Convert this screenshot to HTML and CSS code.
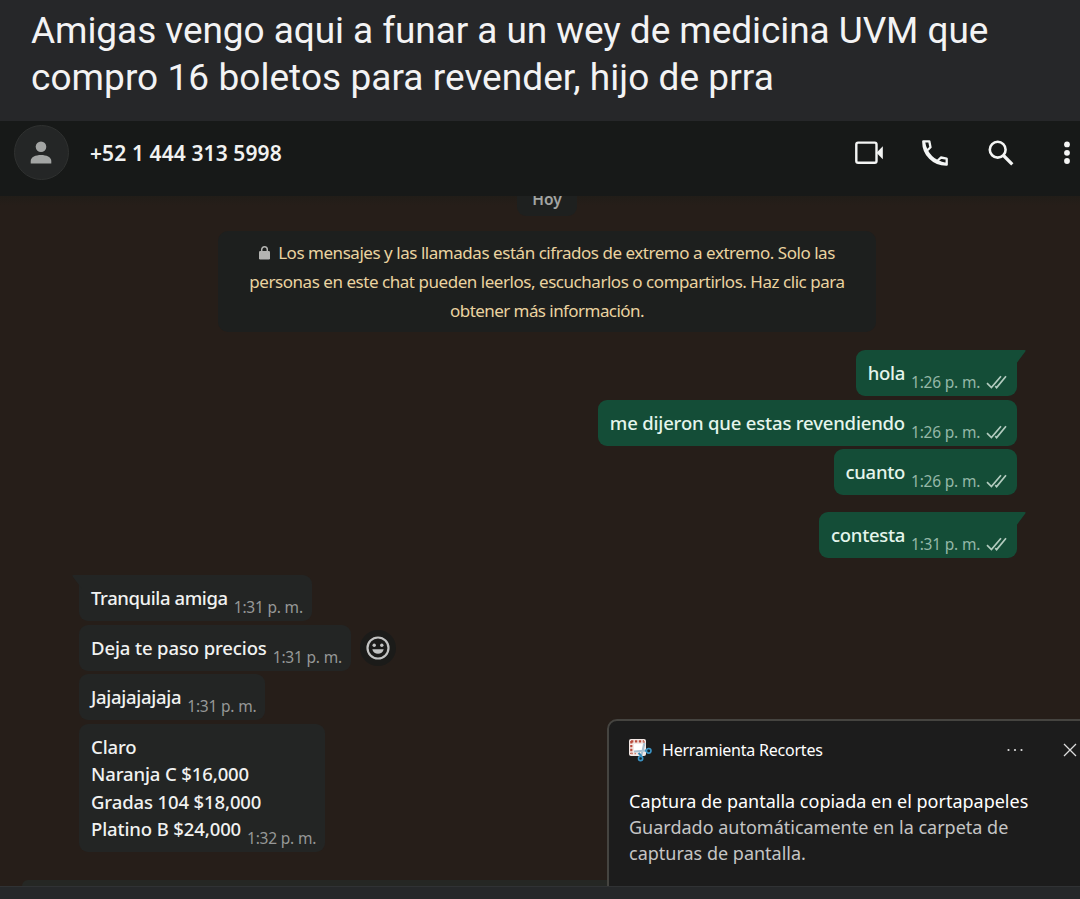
FILE: index.html
```html
<!DOCTYPE html>
<html lang="es">
<head>
<meta charset="utf-8">
<title>Chat</title>
<link rel="stylesheet" href="styles.css">
</head>
<body>
<svg class="defs" width="0" height="0">
  <symbol id="ticks" viewBox="0 0 21 14"><path d="M1 8.200l4.400 4.400L15 1.200M9.300 11.200l1.300 1.400L20 1.200" fill="none" stroke="currentColor" stroke-width="1.700"/></symbol>
  <symbol id="tail" viewBox="0 0 10 14"><path d="M0 0H8.600Q10.200 0 9.300 1.500L2.200 11Q.8 13 0 14Z" fill="currentColor"/></symbol>
</svg>
<div class="page">
  <h1 class="caption"><span class="c1">Amigas vengo aqui a funar a un wey de medicina UVM que</span><br><span class="c2">compro 16 boletos para revender, hijo de prra</span></h1>
  <header class="chat-header">
    <div class="avatar"><svg width="22" height="24" viewBox="0 0 22 24"><circle cx="11" cy="5.800" r="5.300" fill="#a3a5a4"/><path d="M.7 22.500v-2.500c0-4 5-6 10.300-6s10.300 2 10.300 6v2.500z" fill="#a3a5a4"/></svg></div>
    <div class="phone">+52 1 444 313 5998</div>
    <nav class="actions">
      <svg class="video" width="29" height="24" viewBox="0 0 29 24" fill="none" stroke="#f4f5f4" stroke-width="2.400"><rect x="1.300" y="1.600" width="20.200" height="20.200" rx="1.800"/><path d="M21.500 11.700l6.300-6.500v13z" fill="#f4f5f4" stroke="none"/></svg>
      <svg class="call" width="26" height="26" viewBox="0 0 26 26" fill="none" stroke="#f4f5f4" stroke-width="2.300" stroke-linejoin="round"><path d="M1.300 1.300H7.300L8.500 7.200L4.900 10.700Q8.500 17.600 15.300 21.100L18.900 17.500L24.700 18.700V24.700C11.500 24.900 1.100 14.500 1.300 1.300ZM4.900 10.700Q2.500 6.500 2 2M15.300 21.100Q19.500 23.500 24 24"/></svg>
      <svg class="search" width="26" height="26" viewBox="0 0 26 26" fill="none" stroke="#f4f5f4"><circle cx="9.700" cy="9.700" r="7.900" stroke-width="2.600"/><path d="M15.500 15.500l8.800 8.800" stroke-width="3.200"/></svg>
      <svg class="more" width="6" height="24" viewBox="0 0 6 24" fill="#f4f5f4"><circle cx="3" cy="3.400" r="2.900"/><circle cx="3" cy="11.800" r="2.900"/><circle cx="3" cy="20" r="2.900"/></svg>
    </nav>
  </header>
  <main class="chat">
    <div class="day"><span>Hoy</span></div>
    <section class="notice">
      <div class="n1"><svg width="11" height="14" viewBox="0 0 11 14"><rect y="5" width="11" height="8.500" rx="1.200" fill="#b4b4b2"/><path d="M2.700 5.500V3.600a2.800 2.800 0 0 1 5.600 0v1.900" fill="none" stroke="#b4b4b2" stroke-width="1.500"/></svg><span>Los mensajes y las llamadas están cifrados de extremo a extremo. Solo las</span></div>
      <div class="n2"><span>personas en este chat pueden leerlos, escucharlos o compartirlos. Haz clic para</span></div>
      <div class="n3"><span>obtener más información.</span></div>
    </section>
    <section class="thread">
      <div class="msg out tailed"><svg class="tail"><use href="#tail"/></svg><span class="text">hola</span><time>1:26 p. m.</time><svg class="ticks"><use href="#ticks"/></svg></div>
      <div class="msg out"><span class="text wide">me dijeron que estas revendiendo</span><time>1:26 p. m.</time><svg class="ticks"><use href="#ticks"/></svg></div>
      <div class="msg out"><span class="text">cuanto</span><time>1:26 p. m.</time><svg class="ticks"><use href="#ticks"/></svg></div>
      <div class="msg out tailed group"><svg class="tail"><use href="#tail"/></svg><span class="text">contesta</span><time>1:31 p. m.</time><svg class="ticks"><use href="#ticks"/></svg></div>
      <div class="msg in tailed group"><svg class="tail"><use href="#tail"/></svg><span class="text tight">Tranquila amiga</span><time>1:31 p. m.</time></div>
      <div class="row">
        <div class="msg in"><span class="text loose">Deja te paso precios</span><time>1:31 p. m.</time></div>
        <div class="react"><svg width="24" height="24" viewBox="0 0 24 24"><circle cx="12" cy="12" r="10.500" fill="none" stroke="#c2c3c2" stroke-width="2.200"/><circle cx="8.200" cy="9.300" r="1.700" fill="#c2c3c2"/><circle cx="15.800" cy="9.300" r="1.700" fill="#c2c3c2"/><path d="M6.300 13.300H17.700C16.500 19.300 7.500 19.300 6.300 13.300Z" fill="#c2c3c2"/></svg></div>
      </div>
      <div class="msg in"><span class="text">Jajajajajaja</span><time>1:31 p. m.</time></div>
      <div class="msg in list"><span class="text">Claro<br>Naranja C $16,000<br>Gradas 104 $18,000<br>Platino B $24,000</span><time>1:32 p. m.</time></div>
    </section>
    <div class="composer"></div>
    <aside class="toast">
      <div class="toast-head">
        <svg width="24" height="24" viewBox="0 0 24 24"><rect x="1" y="1" width="17" height="17" rx="2" fill="#f3e8e5"/><path d="M3 3.300H16M3.300 3V16" stroke="#b94b3c" stroke-width="2.200" stroke-dasharray="2.400 1.500"/><path d="M16 3v5M3 15.500h5" stroke="#c98073" stroke-width="1.500" stroke-dasharray="2 1.500"/><rect x="6" y="6" width="8.500" height="8" fill="#fff"/><path d="M16.500 5L13 19M6 13.500l13-1" stroke="#a9bfd0" stroke-width="2"/><path d="M10.500 15l3 3M17 12.500l3 .5" stroke="#3387b7" stroke-width="2"/><circle cx="12.600" cy="20.500" r="2.100" fill="#17242c" stroke="#3b93c4" stroke-width="1.600"/><circle cx="20.700" cy="12.800" r="2.300" fill="#17242c" stroke="#3b93c4" stroke-width="1.600"/></svg>
        <span class="app">Herramienta Recortes</span>
        <svg class="dots" width="16" height="4" viewBox="0 0 16 4" fill="#dcdcdc"><circle cx="1.500" cy="2" r="1.100"/><circle cx="8" cy="2" r="1.100"/><circle cx="14.500" cy="2" r="1.100"/></svg>
        <svg class="close" width="14" height="14" viewBox="0 0 14 14"><path d="M1 1l12 12M13 1L1 13" stroke="#dcdcdc" stroke-width="1.300"/></svg>
      </div>
      <p class="t1">Captura de pantalla copiada en el portapapeles</p>
      <p class="t2">Guardado automáticamente en la carpeta de</p>
      <p class="t3">capturas de pantalla.</p>
    </aside>
  </main>
  <footer class="strip"></footer>
</div>
</body>
</html>
```
FILE: styles.css
```css
* { box-sizing: border-box; }
body { margin: 0; background: #262729; font-family: "Noto Sans", "Open Sans", sans-serif; color: #f1f2f1; }
svg { display: block; flex: none; }
.defs { position: absolute; }
.page { width: 1080px; height: 899px; display: flex; flex-direction: column; overflow: hidden; }
.caption { margin: 0; height: 121px; flex: none; padding: 7px 0 0 31px; font: 400 37px/47px Roboto, sans-serif; color: #f3f3f4; white-space: nowrap; }
.c1 { letter-spacing: -.07px; }
.c2 { letter-spacing: .05px; }
.chat-header { height: 75px; flex: none; display: flex; align-items: flex-start; background: #171918; padding: 4px 0 0 14px; }
.avatar { width: 55px; height: 55px; border-radius: 50%; background: #242626; border: 1px solid #2f3130; display: flex; align-items: center; justify-content: center; }
.avatar svg { margin-right: 1px; }
.phone { margin-left: 21px; font-size: 21px; font-weight: 600; letter-spacing: .1px; line-height: 57px; white-space: nowrap; }
.actions { margin-left: auto; display: flex; align-items: center; height: 55px; padding-right: 10px; }
.call { margin-left: 38px; }
.search { margin-left: 40px; }
.more { margin-left: 50px; }
.chat { position: relative; height: 690px; flex: none; overflow: hidden; background: linear-gradient(#211d18, #261e19 10px); display: flex; flex-direction: column; }
.day { margin: -13px 0 0 517px; width: 60px; height: 33px; flex: none; border-radius: 9px; background: #1e201f; color: #a3a5a3; font-size: 15.500px; font-weight: 600; line-height: 33px; text-align: center; }
.notice { margin: 15px 0 0 218px; width: 658px; height: 101px; flex: none; border-radius: 10px; background: #1d1f1e; padding-top: 7px; color: #ead3a0; font-size: 17px; line-height: 29px; letter-spacing: -.46px; white-space: nowrap; }
.notice div { display: flex; justify-content: center; align-items: center; }
.notice svg { margin-right: 8px; }
.notice .n3 { letter-spacing: -.56px; }
.thread { margin-top: 18px; height: 502px; flex: none; padding: 0 63px 0 79px; display: flex; flex-direction: column; align-items: flex-start; gap: 3.500px; }
.msg { position: relative; height: 46px; flex: none; display: flex; align-items: center; border-radius: 9px; white-space: nowrap; font-size: 18.500px; }
.text { line-height: 27.500px; font-weight: 500; letter-spacing: -.3px; }
.wide { letter-spacing: -.18px; }
.tight { letter-spacing: -.4px; }
.loose { letter-spacing: -.12px; }
.msg time { margin-left: 6px; width: 69px; padding-top: 19px; font-size: 15.500px; line-height: 27px; letter-spacing: -.2px; }
.out { align-self: flex-end; background: #144d37; color: #e5f5ec; padding: 0 10px 0 12px; }
.out time { color: #94b7a7; }
.ticks { width: 21px; height: 14px; margin: 18px 0 0 6px; color: #b3cbbf; }
.in { background: #232524; padding: 0 9px 0 12px; }
.in time { color: #969897; }
.group { margin-top: 13.500px; }
.tail { position: absolute; top: 0; right: -9px; width: 10px; height: 14px; color: #144d37; }
.in .tail { right: auto; left: -7px; color: #232524; transform: scaleX(-1); }
.out.tailed { border-top-right-radius: 0; }
.in.tailed { border-top-left-radius: 0; }
.row { display: flex; align-items: center; gap: 9px; }
.react { width: 36px; height: 36px; border-radius: 50%; background: #1b1b19; display: flex; align-items: center; justify-content: center; }
.list { height: 128px; align-items: flex-end; padding-bottom: 9px; }
.list .text { width: 150px; letter-spacing: -.12px; }
.list time { margin-bottom: -9px; }
.composer { margin: auto 0 0 22px; height: 6px; flex: none; background: #252724; border-radius: 10px 0 0 0; }
.toast { position: absolute; left: 607px; top: 523px; width: 490px; height: 190px; background: #1c1c1c; border: 2px solid #454440; border-radius: 10px; padding: 15px 0 0 19px; color: #fff; white-space: nowrap; }
.toast-head { display: flex; align-items: center; height: 28px; width: 451px; }
.app { margin-left: 10px; width: 162px; font-size: 16px; letter-spacing: -.22px; }
.dots { margin-left: 183px; }
.close { margin-left: 40px; }
.toast p { margin: 0 0 0 1px; font-size: 18px; line-height: 26px; }
.toast .t1 { margin-top: 24px; }
.toast .t2, .toast .t3 { color: #c5c5c5; }
.strip { height: 13px; flex: none; background: #26282a; border-top: 1px solid #303234; }
```
